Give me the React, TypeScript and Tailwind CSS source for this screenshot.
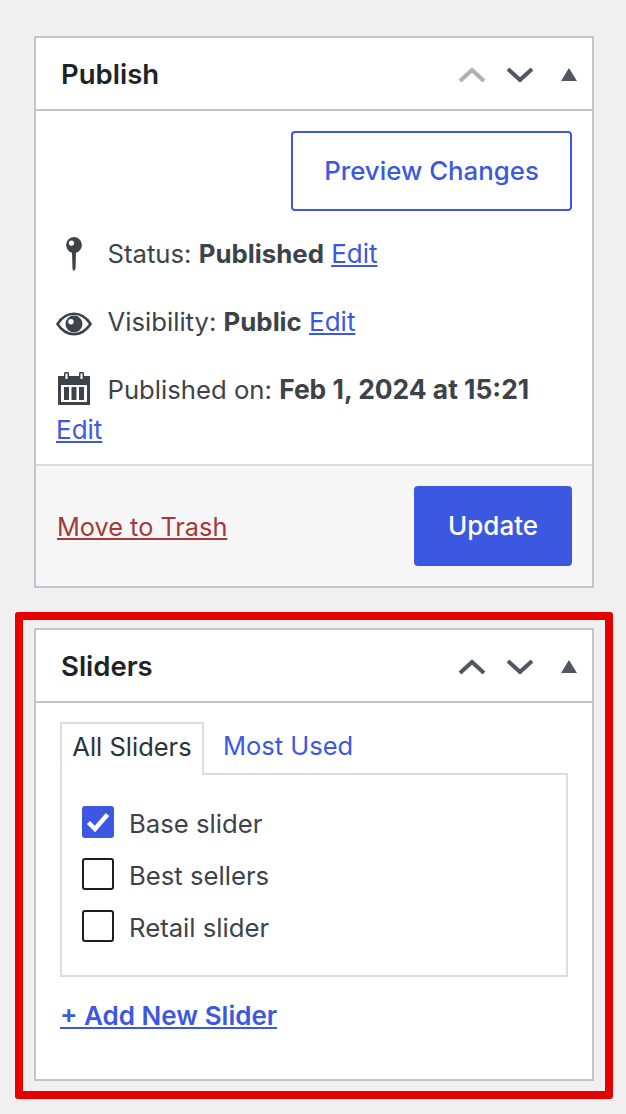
import React from "react";

function Chevrons({ upClass }: { upClass: string }) {
  return (
    <div className="flex items-center pt-[2px]">
      <svg width="30" height="20" viewBox="0 0 30 20" className={`${upClass} mr-[18px]`}>
        <path d="M3 16 L15 5 L27 16" fill="none" stroke="currentColor" strokeWidth="4" />
      </svg>
      <svg width="30" height="20" viewBox="0 0 30 20" className="text-[#50575e] mr-[26px]">
        <path d="M3 4 L15 15 L27 4" fill="none" stroke="currentColor" strokeWidth="4" />
      </svg>
      <svg width="16" height="14" viewBox="0 0 16 14" className="text-[#50575e]">
        <path d="M8 0 L16 13 L0 13 Z" fill="currentColor" />
      </svg>
    </div>
  );
}

function PanelHeader({ title, upClass }: { title: string; upClass: string }) {
  return (
    <div className="h-[73px] pl-[25px] pr-[15px] flex items-center justify-between border-b-2 border-[#c3c4c7]">
      <h2 className="text-[27.5px] font-semibold text-[#1d2327] pt-[1px]">{title}</h2>
      <Chevrons upClass={upClass} />
    </div>
  );
}

function PinIcon() {
  return (
    <svg width="16" height="34" viewBox="0 0 16 34" className="text-[#3c434a]">
      <path
        fillRule="evenodd"
        d="M8 0a8 8 0 0 1 2 15.7L9.500 32 7.500 34 6.500 32 6 15.700A8 8 0 0 1 8 0Zm-2.500 3.500a2.600 2.600 0 1 0 0 5.200 2.600 2.600 0 0 0 0-5.200Z"
        fill="currentColor"
      />
    </svg>
  );
}

function EyeIcon() {
  return (
    <svg width="36" height="24" viewBox="0 0 36 24" className="text-[#3c434a]">
      <path
        d="M1.500 12C6 5 11.500 1.800 18 1.800S30 5 34.500 12C30 19 24.500 22.200 18 22.200S6 19 1.500 12Z"
        fill="none"
        stroke="currentColor"
        strokeWidth="2.600"
      />
      <path
        fillRule="evenodd"
        d="M18 3.500a8.500 8.500 0 1 1 0 17 8.500 8.500 0 0 1 0-17Zm-3 3.500a2.700 2.700 0 1 0 0 5.400 2.700 2.700 0 0 0 0-5.400Z"
        fill="currentColor"
      />
    </svg>
  );
}

function CalendarIcon() {
  return (
    <svg width="32" height="33" viewBox="0 0 32 33" className="text-[#3c434a]">
      <path
        fillRule="evenodd"
        d="M0 4h6V2a2.500 2.500 0 0 1 5 0v2h10V2a2.500 2.500 0 0 1 5 0v2h6v29H0V4Zm3 9v17h26V13H3ZM7.500 1.500V7h2V1.500h-2Zm15 0V7h2V1.500h-2Z"
        fill="currentColor"
      />
      <rect x="6" y="15" width="5" height="13" fill="currentColor" />
      <rect x="13.500" y="15" width="5" height="13" fill="currentColor" />
      <rect x="21" y="15" width="5" height="13" fill="currentColor" />
    </svg>
  );
}

function MetaRow({
  icon,
  iconClass,
  label,
  value,
  valueClass,
  noEdit,
}: {
  icon: React.ReactNode;
  iconClass?: string;
  label: string;
  value: string;
  valueClass?: string;
  noEdit?: boolean;
}) {
  return (
    <div className="h-[68px] flex items-center">
      <div className={`w-[36px] mr-[16px] flex justify-center shrink-0 ${iconClass ?? ""}`}>{icon}</div>
      <span className="-ml-[0.5px] text-[25.7px]">
        {label} <b className={`font-bold ${valueClass ?? "text-[25.8px]"}`}>{value}</b>{" "}
        {!noEdit && <a className="text-[#3d58e0] underline text-[26px]">Edit</a>}
      </span>
    </div>
  );
}

function SliderOption({ label, checked }: { label: string; checked?: boolean }) {
  return (
    <label className="h-[32px] flex items-center gap-[15px]">
      {checked ? (
        <span className="size-[32px] rounded-[3px] bg-[#3d58e0] flex items-center justify-center">
          <svg width="26" height="22" viewBox="0 0 26 22">
            <path d="M3.500 11.500 L10 18 L22.500 3.500" fill="none" stroke="white" strokeWidth="4.500" />
          </svg>
        </span>
      ) : (
        <span className="size-[32px] rounded-[3px] border-2 border-[#1e1e1e] bg-white" />
      )}
      <span className="pt-[4px] text-[25.7px]">{label}</span>
    </label>
  );
}

export default function App() {
  return (
    <div
      className="w-[626px] h-[1114px] overflow-hidden bg-[#f0f0f1] pt-[36px] text-[25.5px] leading-[40px] text-[#3c434a]"
      style={{ fontFamily: "Inter, 'Liberation Sans', sans-serif" }}
    >
      <section className="mx-[34px] w-[560px] h-[552px] border-2 border-[#c3c4c7] bg-white flex flex-col">
        <PanelHeader title="Publish" upClass="text-[#b0b0b0]" />
        <div className="flex-1 flex flex-col">
          <div className="flex justify-end pt-[20px] pr-[20px] pb-[9px]">
            <button className="w-[281px] h-[80px] rounded-[4px] border-2 border-[#3d58e0] text-[#3d58e0] font-medium text-[25.8px]">
              Preview Changes
            </button>
          </div>
          <div className="pl-[20px]">
            <MetaRow icon={<PinIcon />} label="Status:" value="Published" />
            <MetaRow icon={<EyeIcon />} iconClass="pt-[3px]" label="Visibility:" value="Public" />
            <div className="-mt-[1px]">
              <MetaRow
                icon={<CalendarIcon />}
                iconClass="-mt-[1px]"
                label="Published on:"
                value="Feb 1, 2024 at 15:21"
                valueClass="text-[26.4px]"
                noEdit
              />
            </div>
            <a className="block -mt-[13px] text-[#3d58e0] underline text-[26px]">Edit</a>
          </div>
        </div>
        <div className="h-[122px] border-t-2 border-[#dcdcde] bg-[#f6f6f6] pl-[21px] pr-[20px] flex items-center justify-between">
          <a className="text-[#a33a3a] underline pt-[2px] text-[25.3px]">Move to Trash</a>
          <button className="w-[158px] h-[80px] rounded-[4px] bg-[#3d58e0] text-white font-medium text-[26px]">
            Update
          </button>
        </div>
      </section>

      <div className="mt-[24px] mx-[15px] w-[598px] h-[487px] border-[8px] border-[#e60000] rounded-[3px] pt-[8px] px-[11px]">
        <section className="w-[560px] h-[453px] border-2 border-[#c3c4c7] bg-white">
          <PanelHeader title="Sliders" upClass="text-[#50575e]" />
          <div className="pt-[19px] pl-[24px] pr-[24px]">
            <div className="flex h-[53px]">
              <div className="w-[144px] h-[53px] pb-[6px] border-2 border-b-0 border-[#dcdcde] bg-white text-[#2c3338] flex items-center justify-center relative z-10">
                All Sliders
              </div>
              <a className="ml-[19px] pb-[6px] text-[#3d58e0] flex items-center">Most Used</a>
            </div>
            <div className="-mt-[2px] w-[508px] h-[204px] border-2 border-[#dcdcde] pt-[31px] pl-[20px] flex flex-col gap-[20px]">
              <SliderOption label="Base slider" checked />
              <SliderOption label="Best sellers" />
              <SliderOption label="Retail slider" />
            </div>
            <a className="block mt-[19px] text-[#3d58e0] underline font-semibold text-[26px]">+ Add New Slider</a>
          </div>
        </section>
      </div>
    </div>
  );
}
